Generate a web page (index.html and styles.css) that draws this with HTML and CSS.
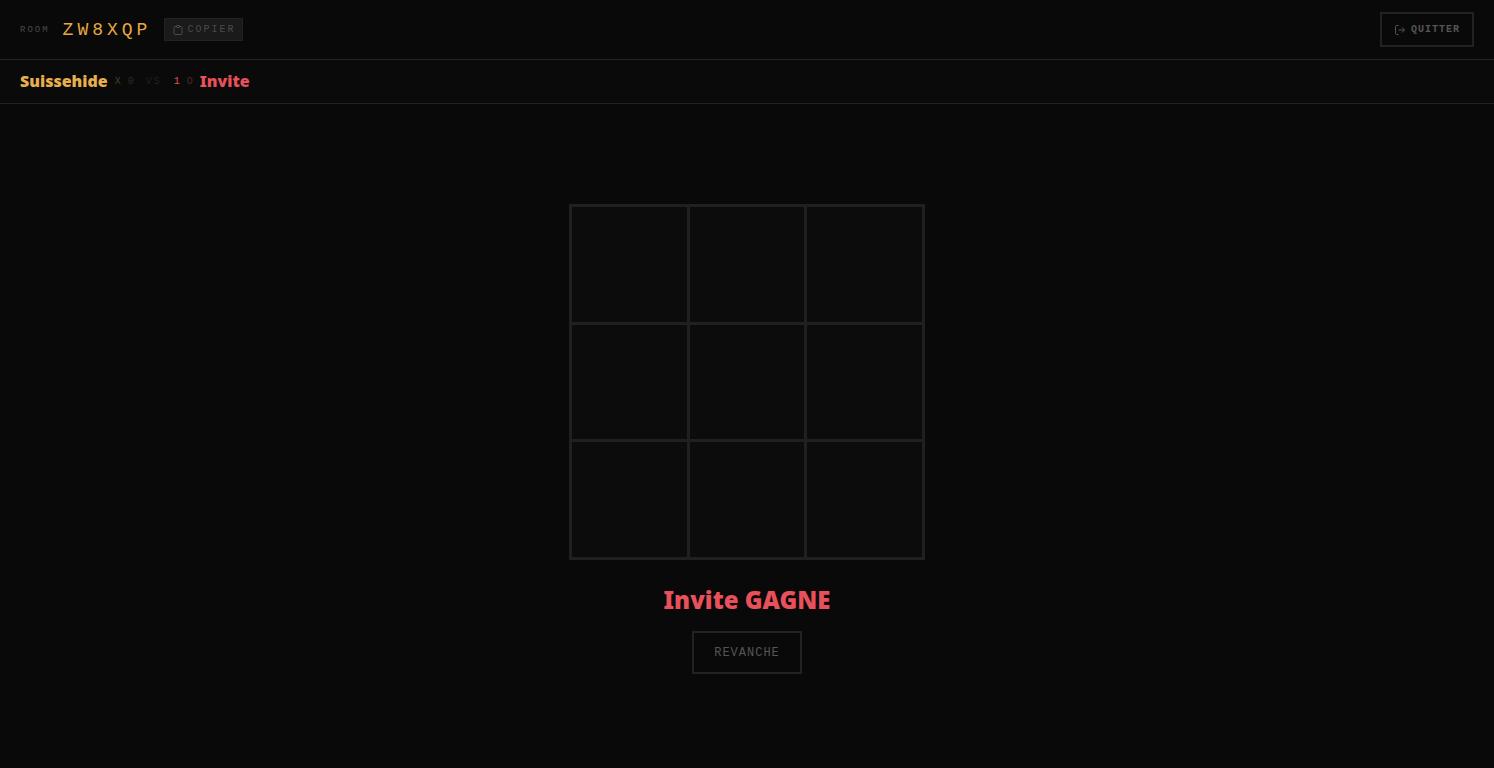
FILE: index.html
```
<!DOCTYPE html>
<html lang="fr">
<head>
    <meta charset="UTF-8">
    <meta name="viewport" content="width=device-width, initial-scale=1.0">
    <title>Morpion - Room ZW8XQP</title>
    <link rel="stylesheet" href="styles.css">
</head>
<body>
    <header class="topbar">
        <div class="room">
            <span class="room-label">ROOM</span>
            <span class="room-code">ZW8XQP</span>
            <button class="btn-copy" type="button">
                <svg width="10" height="10" viewBox="0 0 20 20" fill="none" stroke="currentColor" stroke-width="2">
                    <path d="M13 3h3a2 2 0 0 1 2 2v12a2 2 0 0 1-2 2H4a2 2 0 0 1-2-2V5a2 2 0 0 1 2-2h3"/>
                    <rect x="7" y="1" width="6" height="4" rx="1"/>
                </svg>
                COPIER
            </button>
        </div>
        <button class="btn-quit" type="button">
            <svg width="12" height="12" viewBox="0 0 24 24" fill="none" stroke="currentColor" stroke-width="2">
                <path d="M9 21H5a2 2 0 0 1-2-2V5a2 2 0 0 1 2-2h4"/>
                <path d="M16 17l5-5-5-5"/>
                <path d="M21 12H9"/>
            </svg>
            QUITTER
        </button>
    </header>

    <div class="scorebar">
        <div class="player player-x">
            <span class="name">Suissehide</span>
            <span class="symbol">X</span>
            <span class="score dim">0</span>
        </div>
        <span class="vs">VS</span>
        <div class="player player-o">
            <span class="score">1</span>
            <span class="symbol">O</span>
            <span class="name">Invite</span>
        </div>
    </div>

    <main class="game">
        <div class="board">
            <button class="cell" type="button" aria-label="Case 1"></button>
            <button class="cell" type="button" aria-label="Case 2"></button>
            <button class="cell" type="button" aria-label="Case 3"></button>
            <button class="cell" type="button" aria-label="Case 4"></button>
            <button class="cell" type="button" aria-label="Case 5"></button>
            <button class="cell" type="button" aria-label="Case 6"></button>
            <button class="cell" type="button" aria-label="Case 7"></button>
            <button class="cell" type="button" aria-label="Case 8"></button>
            <button class="cell" type="button" aria-label="Case 9"></button>
        </div>
        <h1 class="result">Invite GAGNE</h1>
        <button class="btn-rematch" type="button">REVANCHE</button>
    </main>
</body>
</html>
```

FILE: styles.css
```
* {
    box-sizing: border-box;
}
body {
    margin: 0;
    min-height: 100vh;
    display: flex;
    flex-direction: column;
    background: #090909;
    color: #555;
    font-family: "Liberation Mono", monospace;
    font-size: 10px;
}
button {
    font-family: inherit;
    color: inherit;
    cursor: pointer;
}

/* Top bar */
.topbar {
    display: flex;
    align-items: center;
    justify-content: space-between;
    padding: 12px 20px;
    border-bottom: 1px solid #222;
}
.room {
    display: flex;
    align-items: center;
    gap: 13px;
}
.room-label {
    font-size: 9px;
    letter-spacing: 2px;
    color: #4a4a4a;
}
.room-code {
    font-size: 18px;
    line-height: 20px;
    letter-spacing: 4px;
    color: #e8a840;
}
.btn-copy {
    display: flex;
    align-items: center;
    gap: 4px;
    height: 23px;
    padding: 0 7px 0 8px;
    background: #1a1a1a;
    border: 1px solid #222;
    font-size: 10px;
    letter-spacing: 2px;
    color: #4a4a4a;
}
.btn-quit {
    display: flex;
    align-items: center;
    gap: 5px;
    height: 35px;
    padding: 0 12px;
    background: transparent;
    border: 2px solid #222;
    font-size: 10px;
    font-weight: bold;
    letter-spacing: 1px;
    color: #555;
}

/* Scores */
.scorebar {
    display: flex;
    align-items: center;
    gap: 12px;
    height: 44px;
    padding: 0 20px;
    background: #0a0a0a;
    border-bottom: 1px solid #222;
}
.player {
    display: flex;
    align-items: center;
    gap: 7px;
}
.name {
    padding-bottom: 2px;
    font-family: "Noto Sans", sans-serif;
    font-size: 16px;
    font-weight: 900;
    line-height: 20px;
}
.player-x {
    color: #e8b04a;
}
.player-o {
    color: #e8505b;
}
.player-x .symbol {
    color: #4d401f;
}
.player-o .symbol {
    color: #55272c;
}
.score.dim {
    color: #2c2c28;
}
.vs {
    letter-spacing: 2px;
    color: #222;
}

/* Board */
.game {
    flex: 1;
    display: flex;
    flex-direction: column;
    align-items: center;
    justify-content: center;
    padding-top: 6px;
}
.board {
    display: grid;
    grid-template-columns: repeat(3, 1fr);
    gap: 3px;
    width: 356px;
    max-width: 90%;
    aspect-ratio: 1;
    border: 3px solid #202020;
    background: #202020;
}
.cell {
    padding: 0;
    border: 0;
    background: #0c0c0c;
}
.result {
    margin: 24px 0 15px;
    font-family: "Noto Sans", sans-serif;
    font-size: 24px;
    font-weight: 900;
    line-height: 32px;
    color: #e8505b;
}
.btn-rematch {
    height: 43px;
    padding: 0 20px;
    background: transparent;
    border: 2px solid #222;
    font-size: 12px;
    letter-spacing: 1px;
    color: #555;
}
```
